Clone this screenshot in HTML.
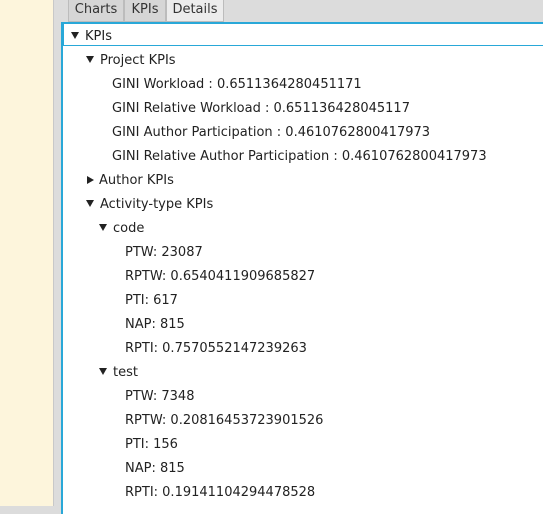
<html><head><style>
body{margin:0;width:543px;height:506px;overflow:hidden;background:#dcdcdc;font-family:"DejaVu Sans",sans-serif;font-size:13px;color:#222;position:relative}
.cream{position:absolute;left:0;top:0;width:53px;height:506px;background:#fdf5dc;border-right:1px solid #c8c8c8}
.tab{position:absolute;top:0;height:21px;line-height:20px;background:#d6d6d6;border:1px solid #bcbcbc;border-top:none;text-align:center;color:#333}
.panel{position:absolute;left:61px;top:22px;width:490px;height:490px;background:#fff;border-left:2px solid #29a8d8;border-top:2px solid #29a8d8}
.sel{position:absolute;left:63px;top:22px;width:490px;height:22px;border:1px solid #29a8d8}
.r{position:absolute;white-space:nowrap;line-height:24px;margin-top:2px}
.t{display:inline-block;width:0;height:0;border-left:4px solid transparent;border-right:4px solid transparent;border-top:7px solid #222;margin-right:6px;vertical-align:1px}
.tr{display:inline-block;width:0;height:0;border-top:4px solid transparent;border-bottom:4px solid transparent;border-left:7px solid #222;margin-right:5px;vertical-align:0px}
</style></head><body>
<div class="cream"></div>
<div class="tab" style="left:68px;width:54px">Charts</div>
<div class="tab" style="left:124px;width:40px">KPIs</div>
<div class="tab" style="left:166px;width:56px;background:#ececec">Details</div>
<div class="panel"></div>
<div class="sel"></div>
<div class="r" style="left:71px;top:23px"><span class="t"></span>KPIs</div>
<div class="r" style="left:86px;top:47px"><span class="t"></span>Project KPIs</div>
<div class="r" style="left:112px;top:71px">GINI Workload : 0.6511364280451171</div>
<div class="r" style="left:112px;top:95px">GINI Relative Workload : 0.651136428045117</div>
<div class="r" style="left:112px;top:119px">GINI Author Participation : 0.4610762800417973</div>
<div class="r" style="left:112px;top:143px">GINI Relative Author Participation : 0.4610762800417973</div>
<div class="r" style="left:87px;top:167px"><span class="tr"></span>Author KPIs</div>
<div class="r" style="left:86px;top:191px"><span class="t"></span>Activity-type KPIs</div>
<div class="r" style="left:99px;top:215px"><span class="t"></span>code</div>
<div class="r" style="left:125px;top:239px">PTW: 23087</div>
<div class="r" style="left:125px;top:263px">RPTW: 0.6540411909685827</div>
<div class="r" style="left:125px;top:287px">PTI: 617</div>
<div class="r" style="left:125px;top:311px">NAP: 815</div>
<div class="r" style="left:125px;top:335px">RPTI: 0.7570552147239263</div>
<div class="r" style="left:99px;top:359px"><span class="t"></span>test</div>
<div class="r" style="left:125px;top:383px">PTW: 7348</div>
<div class="r" style="left:125px;top:407px">RPTW: 0.20816453723901526</div>
<div class="r" style="left:125px;top:431px">PTI: 156</div>
<div class="r" style="left:125px;top:455px">NAP: 815</div>
<div class="r" style="left:125px;top:479px">RPTI: 0.19141104294478528</div>
</body></html>
